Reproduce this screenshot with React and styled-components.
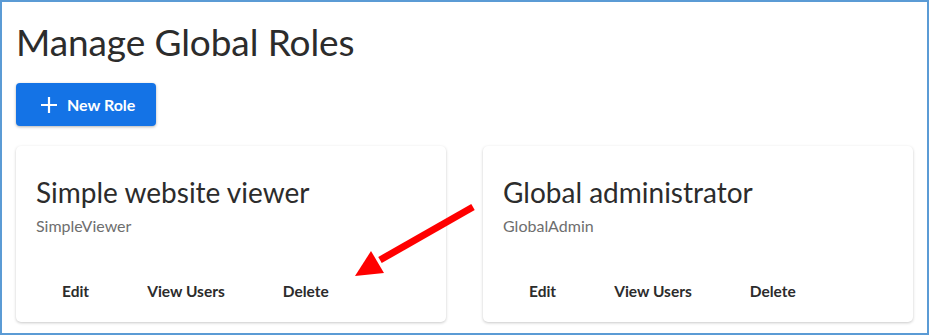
import styled, { createGlobalStyle } from "styled-components";

const GlobalStyle = createGlobalStyle`
  body {
    margin: 0;
    background: #fff;
    font-family: Lato, "Open Sans", sans-serif;
  }
`;

const Frame = styled.div`
  position: relative;
  box-sizing: border-box;
  width: 929px;
  height: 335px;
  border: 2px solid #5b9bd5;
  padding: 16px 14px 0 14px;
  background: #fff;
`;

const Title = styled.h1`
  margin: 0;
  font-size: 37px;
  font-weight: 400;
  color: #2c2c2c;
  line-height: 48px;
  letter-spacing: -0.1px;
`;

const NewButton = styled.button`
  display: flex;
  align-items: center;
  gap: 9px;
  margin-top: 17px;
  height: 43px;
  padding: 0 21px 0 24px;
  border: none;
  border-radius: 4px;
  background: #1473e6;
  color: #fff;
  font-family: inherit;
  font-size: 16px;
  font-weight: 700;
  box-shadow: 0 1px 3px rgba(0, 0, 0, 0.3);
  cursor: pointer;
`;

const CardRow = styled.div`
  display: grid;
  grid-template-columns: 430px 430px;
  gap: 37px;
  margin-top: 20px;
`;

const Card = styled.div`
  box-sizing: border-box;
  height: 176px;
  padding: 30px 20px 0 20px;
  border-radius: 5px;
  background: #fff;
  box-shadow: 0 1px 3px rgba(0, 0, 0, 0.22);
  display: flex;
  flex-direction: column;
`;

const CardTitle = styled.div`
  font-size: 28px;
  color: #2c2c2c;
  line-height: 32px;
`;

const CardKey = styled.div`
  margin-top: 8px;
  font-size: 16px;
  color: #6e6e6e;
`;

const Actions = styled.div`
  display: flex;
  gap: 6px;
  margin-top: 40px;
`;

const Action = styled.button`
  border: none;
  background: none;
  padding: 0 26px;
  height: 32px;
  font-family: inherit;
  font-size: 15.5px;
  font-weight: 700;
  color: #2c2c2c;
  cursor: pointer;
`;

const Arrow = styled.svg`
  position: absolute;
  left: 340px;
  top: 195px;
`;

const roles = [
  { name: "Simple website viewer", key: "SimpleViewer" },
  { name: "Global administrator", key: "GlobalAdmin" },
];

const App = () => {
  return (
    <>
      <GlobalStyle />
      <Frame>
        <Title>Manage Global Roles</Title>
        <NewButton>
          <svg width="18" height="18" viewBox="0 0 18 18">
            <path d="M9 1v16M1 9h16" stroke="#fff" strokeWidth="2.2" />
          </svg>
          New Role
        </NewButton>
        <CardRow>
          {roles.map((r) => (
            <Card key={r.key}>
              <CardTitle>{r.name}</CardTitle>
              <CardKey>{r.key}</CardKey>
              <Actions>
                <Action>Edit</Action>
                <Action>View Users</Action>
                <Action>Delete</Action>
              </Actions>
            </Card>
          ))}
        </CardRow>
        <Arrow width="140" height="85" viewBox="0 0 140 85">
          <path d="M131 10 L38 63" stroke="#ff0000" strokeWidth="7" />
          <polygon points="29,54 13,79 42,76" fill="#ff0000" />
        </Arrow>
      </Frame>
    </>
  );
};

export default App;
